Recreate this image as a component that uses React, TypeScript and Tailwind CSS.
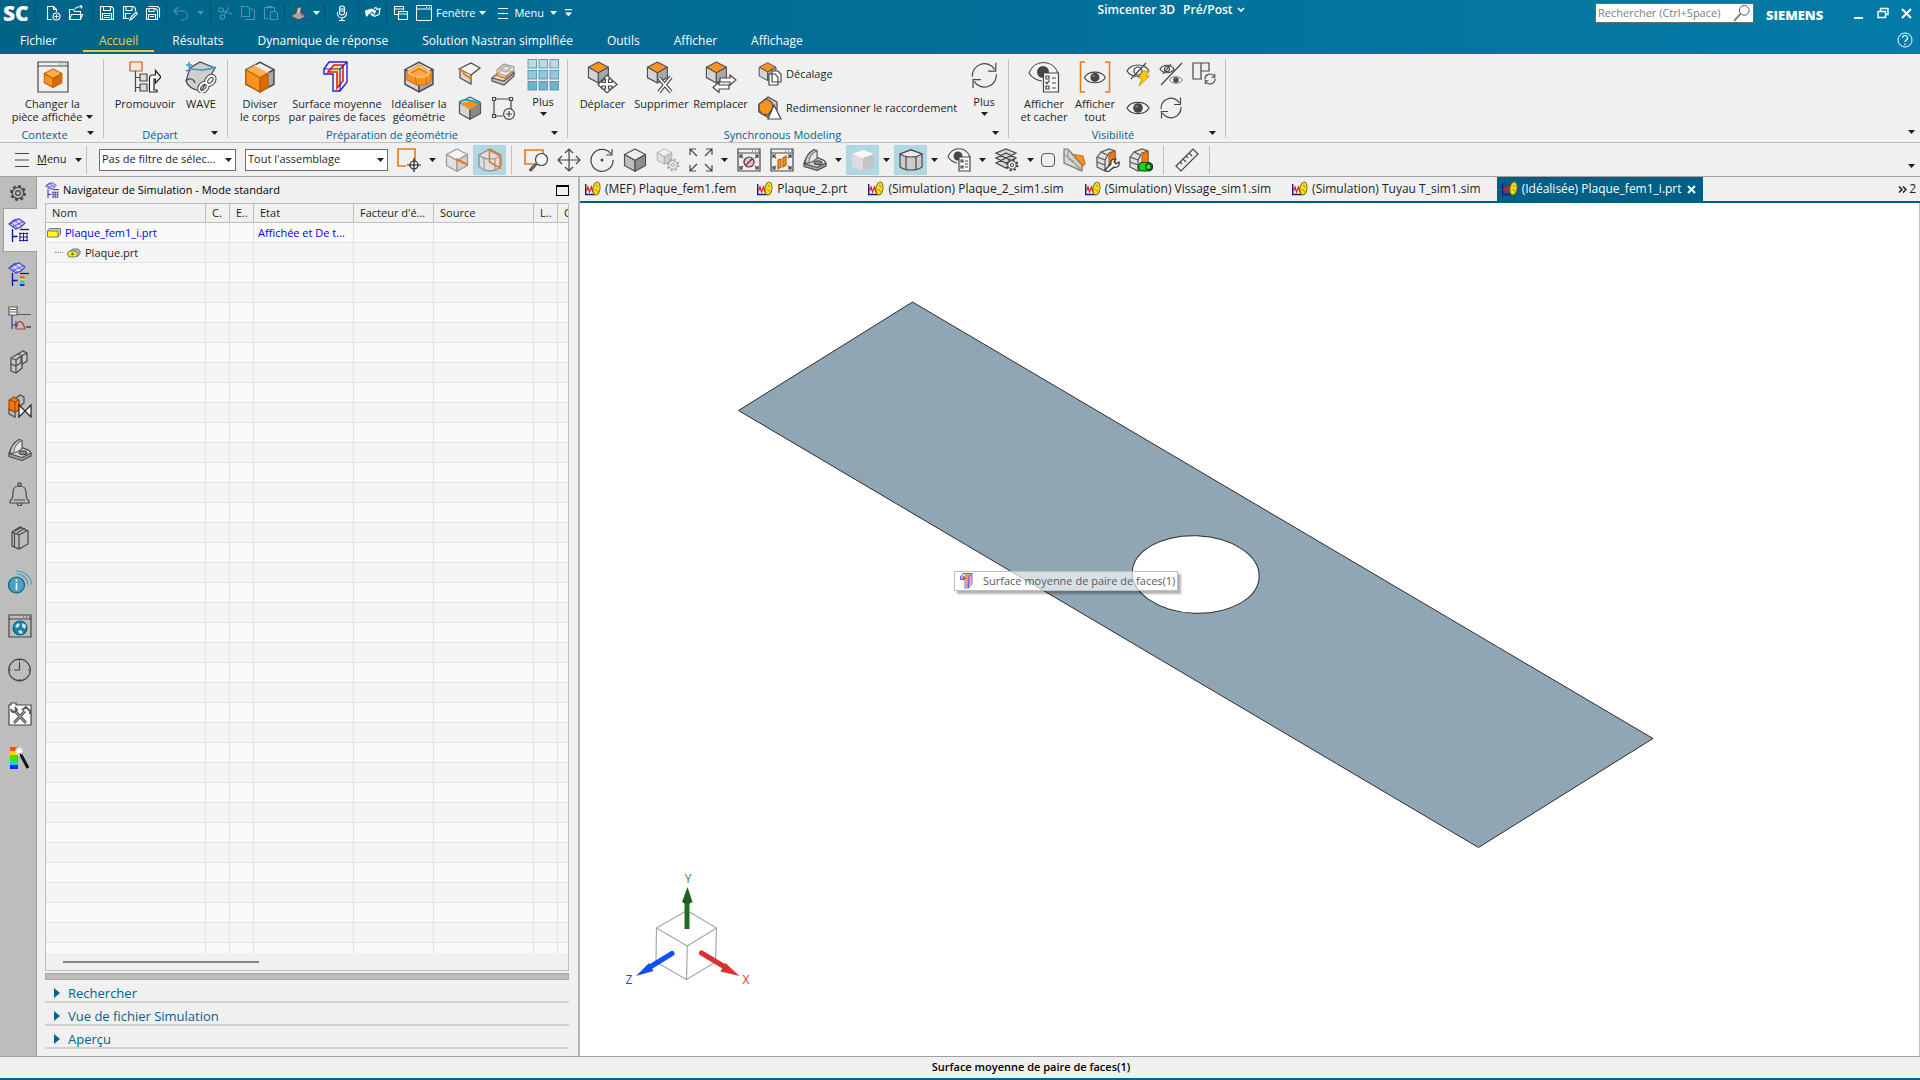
import React from "react";

type IconProps = { size?: number; box?: number; children: React.ReactNode };

function Svg({ size = 24, box = 24, children }: IconProps) {
    return (
        <svg
            width={size}
            height={size}
            viewBox={`0 0 ${box} ${box}`}
            fill="none"
            stroke="#464646"
            strokeWidth="1.2"
            className="shrink-0"
            aria-hidden="true"
        >
            {children}
        </svg>
    );
}

function Caret({ light = false }: { light?: boolean }) {
    return (
        <svg width="7" height="4" viewBox="0 0 7 4" className="shrink-0" aria-hidden="true">
            <path d="M0 0h7L3.500 4z" fill={light ? "#fff" : "#1e1e1e"} />
        </svg>
    );
}

type CubeProps = { x?: number; y?: number; s?: number; top?: string; left?: string; right?: string; line?: string };

function Cube({ x = 0, y = 0, s = 1, top = "#f2f2f2", left = "#d4d4d4", right = "#a8a8a8", line = "#505050" }: CubeProps) {
    return (
        <g transform={`translate(${x} ${y}) scale(${s})`} stroke={line} strokeWidth="1.2" strokeLinejoin="round">
            <path d="M12 1l10.500 5.500L12 12.500 1.500 6.500z" fill={top} />
            <path d="M1.500 6.500L12 12.500V23.200L1.500 17.500z" fill={left} />
            <path d="M22.500 6.500L12 12.500V23.200l10.500-5.700z" fill={right} />
        </g>
    );
}

const orange = { top: "#ffb04d", left: "#f7931e", right: "#d96a00", line: "#c26000" };

function Eye({ x = 0, y = 0, s = 1 }: { x?: number; y?: number; s?: number }) {
    return (
        <g transform={`translate(${x} ${y}) scale(${s})`}>
            <path d="M1 12C5 4.500 19 4.500 23 12 19 19.500 5 19.500 1 12z" fill="#f4f4f4" />
            <circle cx="12" cy="12" r="4.800" fill="#464646" stroke="none" />
            <circle cx="10.500" cy="10.500" r="1.200" fill="#8a8a8a" stroke="none" />
        </g>
    );
}

function Gear({ x, y, s = 1, color = "#464646" }: { x: number; y: number; s?: number; color?: string }) {
    return (
        <g transform={`translate(${x} ${y}) scale(${s})`} stroke={color}>
            <circle r="6.500" strokeWidth="3" strokeDasharray="2.700 2.400" />
            <circle r="5.200" fill="#f0f0f0" />
            <circle r="2" />
        </g>
    );
}

function Bracket() {
    return (
        <g stroke="#4a4a4a" strokeLinejoin="round">
            <path d="M1 15.500v3l13 4 9-4.500v-3l-2-2.500-6-2.500-13 2.500z" fill="#a2a2a2" />
            <path d="M1 15.500l13 4 9-4.500-2-2.500-6-2.500-8 3z" fill="#dadada" />
            <path d="M2 13.500c1-5 4-9 9-12l3 1v8l-6 4-6 1z" fill="#c9c9c9" />
            <path d="M6 14c0-5 3-9 8-11.500v8l-6 4z" fill="#e6e6e6" stroke="#777" />
            <ellipse cx="15" cy="14.800" rx="3.800" ry="1.900" fill="#8a8a8a" />
        </g>
    );
}

function Refresh() {
    return (
        <>
            <path d="M2 13A10 10 0 0 1 20.500 7M22 11A10 10 0 0 1 3.500 17" />
            <path d="M21.500 1.500v7h-6.500M2.500 22.500v-7h6.500" />
        </>
    );
}

function ExpandArrows() {
    return <path d="M1 7V1h6M1 1l7 7M17 1h6v6M23 1l-7 7M1 17v6h6M1 23l7-7M23 17v6h-6M23 23l-7-7" />;
}

function MidSurface() {
    return (
        <g>
            <path d="M3 8l5-7h18v20l-7 9h-7V13H3z" fill="#f0f1ff" stroke="#2323c8" strokeWidth="1.400" />
            <path d="M7 11l6-7h9v16l-6 7V11z" fill="#ffe87a" stroke="#f01414" strokeWidth="1.600" />
            <path d="M3 8h16v22M19 8l7-7" stroke="#2323c8" strokeWidth="1.200" />
        </g>
    );
}

function NavTree({ kind }: { kind: "mesh" | "result" }) {
    return (
        <>
            <path d="M1 6l5-4 5-1 6 4-4 4-5 2z" fill="#d8d8ff" stroke="#4141d4" />
            <path d="M3 4.500l7 6M6 2l8 6M1 6l9-4.500M4 9l11-5" stroke="#4141d4" strokeWidth=".8" />
            <path d="M4.500 11v13M4.500 18.500h5" stroke="#101090" strokeWidth="1.300" />
            <path d="M12 11.500h9" stroke="#222" strokeWidth="1.300" />
            {kind === "mesh" && (
                <path d="M12 14.500v9M15.500 14.500v9M19 14.500v9M11 15.500h9M11 19h9M11 22.500h9" stroke="#2020a0" strokeWidth="1" />
            )}
            {kind === "result" && (
                <g stroke="none">
                    <path d="M12 14.500h4.500v2H12z" fill="#f33" />
                    <path d="M12 16.500h4.500v2H12z" fill="#fd0" />
                    <path d="M12 18.500h4.500v2H12z" fill="#2d4" />
                    <path d="M12 20.500h4.500v2H12z" fill="#2dd" />
                    <path d="M12 22h4.500v2H12z" fill="#22f" />
                </g>
            )}
        </>
    );
}

function WindowFrame({ children }: { children: React.ReactNode }) {
    return (
        <>
            <path d="M1 1h22v22H1zM1 5h22" />
            <path d="M15 3h1M18 3h1M21 3h1" strokeWidth="1.200" />
            {children}
        </>
    );
}

function Brick({ cut = false }: { cut?: boolean }) {
    return (
        <g stroke="#555">
            <path d="M1 9l4-5 8-3 6 2v16l-4 2-6 2-8-4z" fill="#e0e0e0" />
            <path d="M1 9l8 3v11M9 12l4-7 6-2M1 14l8 3M5 4l6 3" />
            <path d="M13 8l3-4h3v15l-6 2z" fill="#ef7d15" stroke="#c96000" />
            {cut && <path d="M13 17l4-6" />}
        </g>
    );
}

function FileGlyph() {
    return (
        <svg width="16" height="16" viewBox="0 0 16 16" fill="none" className="shrink-0" aria-hidden="true">
            <path d="M.700 3v10.500h10" stroke="#1b1b7c" strokeWidth="1.400" />
            <path d="M1.500 10l1.500-4 1.500 5 2-5 1 4 1.500-4" stroke="#d8202c" strokeWidth="1.200" />
            <ellipse cx="11.500" cy="7.500" rx="3.500" ry="6.500" fill="#f5dc1e" stroke="#8a7400" transform="rotate(8 11.500 7.500)" />
            <path d="M11 4l2 2M10.500 8l2 2.500" stroke="#9a8200" />
        </svg>
    );
}

/* ---------- title bar ---------- */

function TitleIcon({ label, dim = false, children }: { label: string; dim?: boolean; children: React.ReactNode }) {
    return (
        <button aria-label={label} className={dim ? "w-[23px] flex justify-center opacity-30" : "w-[23px] flex justify-center"}>
            <svg width="16" height="16" viewBox="0 0 16 16" fill="none" stroke="#fff" strokeWidth="1.100" aria-hidden="true">
                {children}
            </svg>
        </button>
    );
}

function TitleSep() {
    return <span className="w-px h-5 mx-[2px] bg-[#004f70]" />;
}

function QuickAccess() {
    return (
        <div className="flex items-center h-[26px]">
            <span className="w-[33px] pl-[3px] text-[21px] leading-6 font-extrabold">SC</span>
            <TitleSep />
            <div className="flex px-[3px]">
                <TitleIcon label="Nouveau">
                    <path d="M7 14.500H2.500v-13h6l3 3V7M8.500 1.500v3h3" />
                    <circle cx="11.500" cy="11.500" r="3.500" />
                    <path d="M11.500 9.500v4M9.500 11.500h4" />
                </TitleIcon>
                <TitleIcon label="Ouvrir">
                    <path d="M1.500 14.500v-10h4l1 2h6v8zM1.500 14.500l2-5h11l-2 5M7 4c1-2 4-2.500 7-2.500M12 .5l2 1-1 2" />
                </TitleIcon>
            </div>
            <TitleSep />
            <TitleIcon label="Enregistrer">
                <path d="M1.500 1.500h11l2 2v11h-13zM4.500 1.500v4h7v-4M3.500 14.500v-6h9v6M5 10.500h6M5 12.500h6" />
            </TitleIcon>
            <TitleIcon label="Enregistrer sous">
                <path d="M7 13.500H1.500v-12h10l2 2V6M4 1.500v4h6v-4M3.500 13.500v-5H9M8 15l1-3 5-5 1.500 1.500-5 5z" />
            </TitleIcon>
            <TitleIcon label="Tout enregistrer">
                <path d="M3.500 1.500h9l2 2v9M1.500 3.500h9l2 2v9h-11zM4 3.500v3h5v-3M3.500 14.500v-5h7v5M5 11.500h4" />
            </TitleIcon>
            <TitleSep />
            <TitleIcon label="Annuler" dim>
                <path d="M1 6h9a4.500 4.500 0 0 1 0 9H8M5 2L1 6l4 4" />
            </TitleIcon>
            <span className="w-4 flex justify-center opacity-30"><Caret light /></span>
            <TitleSep />
            <TitleIcon label="Couper" dim>
                <circle cx="4" cy="5" r="2.200" /><circle cx="5.500" cy="12" r="2.200" />
                <path d="M6 6l9 3M7 10.500L12 2" />
            </TitleIcon>
            <TitleIcon label="Copier" dim>
                <path d="M1.500 11.500v-10h6l2 2v8zM5.500 14.500h9V6l-2-2h-3" />
            </TitleIcon>
            <TitleIcon label="Coller" dim>
                <path d="M6 13.500H1.500v-11h10V6M4.500 3.500v-2h4v2M7.500 6.500h5l2 2v6h-7z" />
            </TitleIcon>
            <TitleSep />
            <TitleIcon label="Pièce">
                <path d="M1 10l4-2 1-5 4-2v7l4 2v2l-6 3-7-3z" fill="#a8a8a8" stroke="#4a4a4a" />
                <path d="M7 8l2-5" stroke="#ddd" />
                <path d="M10 10l2 1" stroke="#e04020" />
            </TitleIcon>
            <span className="w-3 flex justify-center"><Caret light /></span>
            <TitleSep />
            <div className="flex px-[3px]">
                <TitleIcon label="Microphone">
                    <rect x="5.500" y="1" width="5" height="9" rx="2.500" />
                    <path d="M3.500 7v1.500a4.500 4.500 0 0 0 9 0V7M8 13v2.500M5 15.500h6M6 4h4M6 6h4" />
                </TitleIcon>
            </div>
            <TitleSep />
            <TitleIcon label="Mode tactile">
                <path d="M.5 6l6-2 4 2-2 5-3-2-4 2z" fill="#fff" stroke="#fff" />
                <path d="M3 10.500l3-2M6 7l3 2" stroke="#006488" />
                <path d="M9 3.500l2-1 1 2 3-1-1 6-5 2" />
            </TitleIcon>
            <TitleSep />
            <TitleIcon label="Changer de fenêtre">
                <path d="M5 9.500H1.500v-8h9V5M1.500 4h9M5.500 6.500h9v8h-9zM5.500 9h9" />
            </TitleIcon>
            <button className="flex items-center gap-1 ml-1 text-[11px]">
                <svg width="16" height="16" viewBox="0 0 16 16" fill="none" stroke="#fff" aria-hidden="true">
                    <path d="M.5 .5h15v15H.5zM.5 4h15M10 2.500h1M13 2.500h1" />
                </svg>
                Fenêtre
                <Caret light />
            </button>
            <button className="flex items-center gap-[6px] ml-3 text-[11px]">
                <svg width="10" height="11" viewBox="0 0 10 11" stroke="#fff" aria-hidden="true">
                    <path d="M0 .5h10M0 5.500h10M0 10.500h10" />
                </svg>
                Menu
                <Caret light />
            </button>
            <button aria-label="Options de la barre" className="ml-2">
                <svg width="7" height="8" viewBox="0 0 7 8" aria-hidden="true">
                    <path d="M0 0h7v1.200H0zM0 3.500h7L3.500 7.500z" fill="#fff" />
                </svg>
            </button>
        </div>
    );
}

function TitleBar() {
    const menus = ["Accueil", "Résultats", "Dynamique de réponse", "Solution Nastran simplifiée", "Outils", "Afficher", "Affichage"];
    return (
        <header className="h-[54px] shrink-0 bg-linear-to-r from-[#006487] to-[#057ba8] text-white flex flex-col">
            <div className="flex h-[26px]">
                <QuickAccess />
                <span className="grow-3" />
                <button className="h-5 flex items-center gap-2 text-xs font-semibold">
                    Simcenter 3D
                    <span className="flex items-center gap-1">
                        Pré/Post
                        <svg width="8" height="6" viewBox="0 0 8 6" fill="none" stroke="#fff" strokeWidth="1.600" aria-hidden="true">
                            <path d="M1 1l3 3 3-3" />
                        </svg>
                    </span>
                </button>
                <span className="grow-2" />
                <div className="flex items-center">
                    <label className="flex items-center w-[159px] h-5 bg-white border border-[#6a6a6a] px-[2px]">
                        <input
                            aria-label="Rechercher"
                            placeholder="Rechercher (Ctrl+Space)"
                            className="w-0 grow text-[11px] text-black placeholder:text-[#7d7d7d] outline-none"
                        />
                        <Svg size={18}>
                            <circle cx="15" cy="8.500" r="6.500" />
                            <path d="M10.500 13.500l-8 9M9.500 12.500l-8 9 1 1.500" />
                        </Svg>
                    </label>
                    <span className="w-[100px] pl-3 pt-[3px] text-[13px] leading-4 font-extrabold">SIEMENS</span>
                    <button aria-label="Réduire" className="w-[9px] h-3 border-b-2 border-white" />
                    <button aria-label="Restaurer" className="ml-[14px]">
                        <svg width="12" height="12" viewBox="0 0 12 12" fill="none" stroke="#fff" strokeWidth="1.400" aria-hidden="true">
                            <path d="M3.500 4V1.500h7.500v6H8.500M1 4.500h7.500v6H1z" />
                        </svg>
                    </button>
                    <button aria-label="Fermer" className="ml-3 mr-2">
                        <svg width="11" height="11" viewBox="0 0 11 11" stroke="#fff" strokeWidth="2" aria-hidden="true">
                            <path d="M1 1l9 9M10 1l-9 9" />
                        </svg>
                    </button>
                </div>
            </div>
            <nav className="flex gap-[2px] h-[28px] pl-1 pr-[7px] items-start text-xs leading-[30px]">
                <a href="#" className="h-[26px] pl-4 pr-6">Fichier</a>
                {menus.map((name) => (
                    <a
                        key={name}
                        href="#"
                        className={name === "Accueil" ? "h-[26px] px-4 text-[#ffc83c] border-b-2 border-[#ffc83c]" : "h-[26px] px-4"}
                    >
                        {name}
                    </a>
                ))}
                <button aria-label="Aide" className="ml-auto mt-[6px]">
                    <svg width="16" height="16" viewBox="0 0 16 16" fill="none" stroke="#fff" aria-hidden="true">
                        <circle cx="8" cy="8" r="7" />
                        <path d="M5.500 6a2.500 2.500 0 1 1 3.500 2.300c-.8.400-1 .7-1 1.700M8 11.500v1.500" strokeWidth="1.200" />
                    </svg>
                </button>
            </nav>
        </header>
    );
}

/* ---------- ribbon ---------- */

function Group({ title, className, children }: { title: string; className: string; children: React.ReactNode }) {
    return (
        <section className={`flex flex-col h-[79px] mt-[5px] border-r border-[#bebebe] ${className}`}>
            <div className="flex h-[69px] shrink-0">{children}</div>
            <div className="flex items-center h-[13px]">
                <h2 className="grow text-center text-[11px] leading-[13px] text-[#00648c]">{title}</h2>
                <button aria-label={`Options ${title}`} className="w-4 h-3 pb-1 flex items-center"><Caret /></button>
            </div>
        </section>
    );
}

function BigButton({ lines, caret = false, className, children }: { lines: string[]; caret?: boolean; className: string; children: React.ReactNode }) {
    return (
        <button className={`flex flex-col items-center shrink-0 pt-[2px] text-[11px] leading-[13px] whitespace-nowrap ${className}`}>
            <Svg size={32} box={32}>{children}</Svg>
            <span className="mt-1">{lines[0]}</span>
            {lines[1] && (
                <span className="flex items-center gap-1">
                    {lines[1]}
                    {caret && <Caret />}
                </span>
            )}
        </button>
    );
}

function PlusButton({ children }: { children: React.ReactNode }) {
    return (
        <button className="w-12 shrink-0 flex flex-col items-center text-[11px] leading-[13px]">
            <Svg size={32} box={32}>{children}</Svg>
            <span className="mt-1 mb-1">Plus</span>
            <Caret />
        </button>
    );
}

function SmallButton({ label, children }: { label: string; children: React.ReactNode }) {
    return (
        <button aria-label={label} className="w-[33px] h-[34px] flex items-center justify-center">
            <Svg>{children}</Svg>
        </button>
    );
}

const faceTop = { top: "#f7931e" };

function Ribbon() {
    return (
        <div className="h-[89px] shrink-0 flex bg-[#f0f0f0] border-b border-[#bebebe]">
            <Group title="Contexte" className="w-[104px] pl-[2px]">
                <BigButton lines={["Changer la", "pièce affichée"]} caret className="w-full">
                    <path d="M1 1h30v30H1zM1 5h30M22 3h1M25 3h1M28 3h1" />
                    <Cube x={6} y={7} s={0.84} {...orange} />
                </BigButton>
            </Group>
            <Group title="Départ" className="w-[124px] pl-[5px]">
                <BigButton lines={["Promouvoir"]} className="w-18">
                    <path d="M1 1h12v9H1z" fill="#f3e6dc" stroke="#c95a1e" />
                    <path d="M6.500 10v21M6.500 16.500H11M6.500 26.500H11" />
                    <path d="M11 13h7v7h-7zM11 23h7v7h-7z" fill="#ddd" />
                    <path d="M20.500 31V17c0-2 1-3 3-3h3V9.500l5.500 6.500-5.500 6V18h-1.500v11h3v2z" fill="#fff" stroke="#222" />
                </BigButton>
                <BigButton lines={["WAVE"]} className="w-10">
                    <path d="M1 20l4-13 10-6 15 6-6 10-8 13c-8-1-13-4-15-10z" fill="#cfcfcf" />
                    <path d="M1 20c3-4 8-2 9 2" />
                    <path d="M1 4h6M4 1v6M1 10c8-5 14 3 30-4" stroke="#1aa7c9" strokeWidth="1.500" />
                    <g strokeWidth="4"><ellipse cx="25.500" cy="19" rx="3.500" ry="5" transform="rotate(40 25 19)" /><ellipse cx="18.500" cy="26" rx="3.500" ry="5" transform="rotate(40 18 26)" /></g>
                    <g stroke="#fff" strokeWidth="2"><ellipse cx="25.500" cy="19" rx="3.500" ry="5" transform="rotate(40 25 19)" /><ellipse cx="18.500" cy="26" rx="3.500" ry="5" transform="rotate(40 18 26)" /></g>
                </BigButton>
            </Group>
            <Group title="Préparation de géométrie" className="w-[340px] pl-[5px]">
                <BigButton lines={["Diviser", "le corps"]} className="w-[54px]">
                    <Cube s={1.33} />
                    <path d="M2 9l9-5 14 7.500-9 5z" fill="#ffb04d" stroke="none" />
                    <path d="M2 9l14 7.500V31L2 23z" fill="#f7931e" stroke="#c26000" />
                    <path d="M16 16.500l8-4.500v14.500L16 31z" fill="#d96a00" stroke="#c26000" />
                    <path d="M11 4l13 7.500" stroke="#e8e8e8" />
                </BigButton>
                <BigButton lines={["Surface moyenne", "par paires de faces"]} className="w-25">
                    <MidSurface />
                </BigButton>
                <BigButton lines={["Idéaliser la", "géométrie"]} className="w-16">
                    <Cube s={1.33} />
                    <path d="M4 11l12-7 12 7v8l-5 5H14L4 19z" fill="#f7931e" stroke="#d97408" />
                    <path d="M5 11l11-6 11 6-4 5H12z" fill="#ffac48" stroke="#ffd08f" />
                    <path d="M12 16l2 8M23 16v8M8 12l8-4 8 4" stroke="#d97408" />
                </BigButton>
                <div className="flex flex-wrap content-start shrink-0 w-[66px] ml-[2px] -mt-[2px]">
                    <SmallButton label="Séparer les faces">
                        <path d="M1 7l12-6 9 5-9 7z" fill="#f5f5f5" />
                        <path d="M13 13v9L2 16V8" fill="#d8d8d8" />
                        <path d="M1 7l5 3v2l6 4 1-3" stroke="#e67a10" strokeWidth="1.800" />
                    </SmallButton>
                    <SmallButton label="Empiler les faces">
                        <path d="M1 16v3l12 4 10-9v-4z" fill="#bdbdbd" stroke="#555" />
                        <path d="M1 16l10-8 12 3-10 8z" fill="#ddd" stroke="#555" />
                        <path d="M5 13l7-6 9 3-7 6z" fill="#fff" stroke="#e67a10" strokeWidth="1.800" />
                        <path d="M6 8l7-6 10 3v3l-8 6-9-3z" fill="#e4e4e4" fillOpacity=".6" stroke="#999" />
                        <path d="M9 8l5-4 6 2-5 4z" stroke="#aaa" />
                    </SmallButton>
                    <SmallButton label="Diviser la face">
                        <Cube right="#8a8a8a" />
                        <path d="M2 7l10-2 10 2-10 7z" fill="#f7931e" stroke="none" />
                        <path d="M1 6c7-4 14-1 22 2" stroke="#1aa7c9" strokeWidth="2" />
                    </SmallButton>
                    <SmallButton label="Ajouter une esquisse">
                        <path d="M3 3h17v11M3 3v17h9" />
                        <path d="M1.500 1.500h3v3h-3zM18.500 1.500h3v3h-3zM1.500 18.500h3v3h-3z" fill="#f0f0f0" />
                        <circle cx="18" cy="18" r="5.400" fill="#f0f0f0" />
                        <path d="M18 15v6M15 18h6" />
                    </SmallButton>
                </div>
                <PlusButton>
                    {[0, 11, 22].map((y) =>
                        [1, 12, 23].map((x) => (
                            <rect
                                key={`${x}-${y}`}
                                x={x}
                                y={y + 0.5}
                                width="8.5"
                                height="8.5"
                                fill={y === 0 ? "#b9dbe6" : y === 11 ? "#98c8d8" : "#73b2c8"}
                                stroke="#3f8fae"
                                strokeWidth=".8"
                            />
                        ))
                    )}
                </PlusButton>
            </Group>
            <Group title="Synchronous Modeling" className="w-[441px] pl-[5px]">
                <BigButton lines={["Déplacer"]} className="w-[59px]">
                    <Cube s={0.95} {...faceTop} />
                    <path d="M20 14l4 4h-2.500v3.500H25V19l5 4.500-5 4V25h-3.500v3H24l-4 4-4-4h2.500v-3H15v2.500l-4-4 4-4.500v2.500h3.500V18H16z" fill="#fff" />
                </BigButton>
                <BigButton lines={["Supprimer"]} className="w-[59px]">
                    <Cube s={0.95} {...faceTop} />
                    <path d="M13 17l12 14M25 16L13 31" strokeWidth="4" />
                    <path d="M13 17l12 14M25 16L13 31" stroke="#fff" strokeWidth="1.800" />
                </BigButton>
                <BigButton lines={["Remplacer"]} className="w-[59px]">
                    <Cube s={0.95} {...faceTop} />
                    <path d="M15 17h10v-3l6 5-6 5v-3H15zM24 24H14v-3l-6 5.500 6 5V28h10z" fill="#fff" />
                </BigButton>
                <div className="flex flex-col grow pl-2 -mt-[2px] text-[11px]">
                    <button className="flex items-center gap-1 h-[34px]">
                        <Svg>
                            <Cube s={0.8} {...faceTop} />
                            <path d="M14 9h6l3 3v8h-9zM11 12h6l3 3v8h-9z" fill="#fff" />
                        </Svg>
                        Décalage
                    </button>
                    <button className="flex items-center gap-1 h-[34px]">
                        <Svg>
                            <path d="M1 9l9-8 9 5v9l-8 7-10-6z" fill="#ccc" />
                            <path d="M1 8l7-5c5 1 7 4 7 9l-5 7-6-1-3-4z" fill="#f7931e" stroke="#444" />
                            <path d="M16 9l7 14H10z" fill="#fff" />
                        </Svg>
                        Redimensionner le raccordement
                    </button>
                </div>
                <PlusButton>
                    <g transform="translate(2 2) scale(1.200)" strokeWidth="1"><Refresh /></g>
                </PlusButton>
            </Group>
            <Group title="Visibilité" className="w-[217px] pl-2">
                <BigButton lines={["Afficher", "et cacher"]} className="w-[54px]">
                    <path d="M1 12C6-2 25-2 30 12M1 12c3 5 7 7 13 8" fill="#f4f4f4" />
                    <circle cx="15" cy="11" r="6" fill="#464646" stroke="none" />
                    <path d="M15.500 12h15v19h-15z" fill="#f8f8f8" />
                    <path d="M18 15h3v3h-3zM18 25h3v3h-3zM17.500 21l1.500 1.500 2.500-3M24 17h4M24 22h4M24 27h4" />
                </BigButton>
                <BigButton lines={["Afficher", "tout"]} className="w-12">
                    <g transform="translate(4.500 5) scale(.95)"><Eye /></g>
                    <path d="M6 1H1.500v30H6M26 1h4.500v30H26" stroke="#e67a10" strokeWidth="1.500" />
                </BigButton>
                <div className="flex flex-wrap content-start shrink-0 w-[99px] ml-[2px] -mt-[2px]">
                    <SmallButton label="Cacher immédiatement">
                        <path d="M1 9c4-8 18-8 22 0-4 7-18 7-22 0zM20 1L5 17" />
                        <circle cx="12" cy="9" r="4" />
                        <path d="M17 9h6l-3 5h3.500L13 24l3-8h-3.500z" fill="#ffc814" stroke="#c98a00" strokeWidth=".8" />
                    </SmallButton>
                    <SmallButton label="Inverser affiché et caché">
                        <path d="M23 1L2 23M1 7c3-5 11-5 14 0-3 5-11 5-14 0zM12 2L4 12" />
                        <circle cx="8" cy="7" r="2.500" />
                        <Eye x={10} y={11} s={0.58} />
                    </SmallButton>
                    <SmallButton label="Disposition">
                        <path d="M10 17H1V1h16v8H9M9 1v16" />
                        <g transform="translate(12 11) scale(.5)" strokeWidth="2.200"><Refresh /></g>
                    </SmallButton>
                    <SmallButton label="Afficher"><Eye /></SmallButton>
                    <SmallButton label="Actualiser"><Refresh /></SmallButton>
                </div>
            </Group>
            <button aria-label="Options du ruban" className="ml-auto self-end px-[5px] pb-2"><Caret /></button>
        </div>
    );
}

/* ---------- selection toolbar ---------- */

function Tool({ label, on = false, children }: { label: string; on?: boolean; children: React.ReactNode }) {
    return (
        <button aria-label={label} className={on ? "w-[33px] h-[30px] flex items-center justify-center bg-[#b0d7e2]" : "w-[33px] h-[30px] flex items-center justify-center"}>
            <Svg>{children}</Svg>
        </button>
    );
}

function ToolCaret() {
    return <button aria-label="Plus d'options" className="w-[15px] flex justify-center"><Caret /></button>;
}

function Select({ label, value, className }: { label: string; value: string; className: string }) {
    return (
        <div className={`relative flex items-center ${className}`}>
            <select aria-label={label} className="appearance-none w-full h-[22px] pl-[2px] pr-4 text-[11px] bg-white border border-[#6e6e6e]">
                <option>{value}</option>
            </select>
            <span className="absolute right-1 pointer-events-none"><Caret /></span>
        </div>
    );
}

const cornerArrows = "M3 10V7h3M3 7l3 3M21 10V7h-3M21 7l-3 3M3 18v3h3M3 21l3-3M21 18v3h-3M21 21l-3-3";

function Toolbar() {
    return (
        <div className="h-[34px] shrink-0 flex items-center bg-[#f0f0f0] border-b border-[#a0a0a0]">
            <button className="flex items-center gap-2 w-[87px] pl-[15px] text-[11px] border-r border-[#bebebe] h-[28px]">
                <svg width="14" height="14" viewBox="0 0 14 14" stroke="#464646" aria-hidden="true">
                    <path d="M0 .5h14M0 7h14M0 13.500h14" />
                </svg>
                <span><u>M</u>enu</span>
                <Caret />
            </button>
            <Select label="Filtre de sélection" value="Pas de filtre de sélec..." className="w-[137px] ml-3" />
            <Select label="Portée" value="Tout l'assemblage" className="w-[143px] ml-[9px]" />
            <span className="w-1" />
            <Tool label="Point">
                <path d="M9 18H1V1h17v13" stroke="#e67a10" strokeWidth="1.600" />
                <circle cx="17" cy="17" r="4" stroke="#222" />
                <path d="M17 10v14M10 17h14" stroke="#222" />
            </Tool>
            <ToolCaret />
            <Tool label="Arête">
                <Cube top="#f5f5f5" left="#e2e2e2" right="#d0d0d0" line="#999" />
                <path d="M11 11l12 6" stroke="#e67a10" strokeWidth="2" />
            </Tool>
            <Tool label="Face" on>
                <path d="M1 7l11-6 11 6v11c-4 6-17 7-22 0z" fill="#dedede" stroke="#888" />
                <path d="M1 7c4 4 8 4 11 4s8 0 11-4M6 10v12M17 10v12" stroke="#999" />
                <path d="M11.500 2v12l10.500 6V8z" stroke="#e67a10" strokeWidth="1.500" />
            </Tool>
            <span className="w-px h-[28px] ml-[5px] mr-[7px] bg-[#bebebe]" />
            <Tool label="Zoom">
                <path d="M9 16H1V2h18v4" stroke="#e67a10" strokeWidth="1.600" />
                <circle cx="17.500" cy="11.500" r="6" fill="#f8f8f8" />
                <path d="M13 16l-6 7-1.500-1 6-7" fill="#ccc" />
            </Tool>
            <Tool label="Déplacer la vue">
                <path d="M12 1v22M1 12h22M8 5l4-4 4 4M8 19l4 4 4-4M5 8l-4 4 4 4M19 8l4 4-4 4" />
            </Tool>
            <Tool label="Rotation">
                <path d="M21 6A11 11 0 1 0 23 12M22 1v6h-6" />
                <circle cx="12" cy="12" r="1.500" fill="#464646" stroke="none" />
            </Tool>
            <Tool label="Trimétrique"><Cube top="#eee" left="#bdbdbd" right="#8e8e8e" /></Tool>
            <Tool label="Options de rendu">
                <Cube s={0.7} line="#aaa" top="#eee" left="#ddd" right="#ccc" />
                <Gear x={17} y={17} s={0.8} color="#a8a8a8" />
            </Tool>
            <Tool label="Ajuster"><ExpandArrows /></Tool>
            <ToolCaret />
            <Tool label="Masquer la pièce">
                <WindowFrame>
                    <path d={cornerArrows} />
                    <path d="M5 14l3-3h8l3 3-3 3H8z" fill="#f6b6c8" stroke="none" />
                    <circle cx="12" cy="14" r="5" fill="#f6b6c8" />
                    <path d="M8.500 17.500l7-7" />
                </WindowFrame>
            </Tool>
            <Tool label="Sections">
                <WindowFrame>
                    <path d={cornerArrows} />
                    <path d="M8 12l3-1v8l-3 2zM13 10l3-2v9l-3 2z" fill="#f7931e" stroke="#c26000" />
                </WindowFrame>
            </Tool>
            <Tool label="Style de pièce"><Bracket /></Tool>
            <ToolCaret />
            <Tool label="Ombré" on>
                <path d="M1 6l11-4 11 4v13l-11 4-11-4z" fill="#dcdcdc" stroke="none" />
                <path d="M1 6l11-4 11 4-11 4z" fill="#f8f8f8" stroke="none" />
                <path d="M12 10l11-4v13l-11 4z" fill="#c4c4c4" stroke="none" />
            </Tool>
            <ToolCaret />
            <Tool label="Ombré avec arêtes" on>
                <path d="M1 6l11-4 11 4v13c-5 4-17 4-22 0z" fill="#ccc" />
                <path d="M1 6l11-4 11 4c-6 4-16 4-22 0z" fill="#ececec" />
                <path d="M7 9v13M17 9v13" />
            </Tool>
            <ToolCaret />
            <Tool label="Afficher et cacher">
                <path d="M1 9C5-2 19-2 23 9M1 9c2 3 5 5 9 6" fill="#f4f4f4" />
                <circle cx="11" cy="8" r="4.500" fill="#464646" stroke="none" />
                <path d="M12 9h11v14H12z" fill="#f8f8f8" />
                <path d="M14 12h2v2h-2zM14 18h2v2h-2zM18 13h3M18 16h3M18 19h3" />
            </Tool>
            <ToolCaret />
            <Tool label="Calques">
                <path d="M1 15l10-5 10 5-10 5zM1 10l10-5 10 5-10 5zM1 5l10-4 10 4-10 5z" fill="#d8d8d8" />
                <Gear x={17} y={17} s={0.8} />
            </Tool>
            <ToolCaret />
            <span className="w-5 flex justify-center">
                <input type="checkbox" aria-label="Section active" className="appearance-none w-[14px] h-[14px] border border-[#555] rounded-sm" />
            </span>
            <Tool label="Plan de coupe">
                <path d="M8 6l12 2 2 8-7 6z" fill="#f7931e" stroke="#d97408" />
                <path d="M1 1h4l14 16v6L1 15z" fill="#d6d6d6" fillOpacity=".85" stroke="#777" />
                <path d="M5 1v9l14 12M1 6l10 8" stroke="#999" />
            </Tool>
            <Tool label="Modifier la section">
                <Brick cut />
                <path d="M9 22l6-6c-1-3 2-6 5-5l-2 3 2 2 3-2c1 4-2 6-5 5l-6 5z" fill="#fff" stroke="#333" />
            </Tool>
            <Tool label="Activer la section">
                <Brick />
                <rect x="9.500" y="14.500" width="14" height="8.500" rx="4" fill="#19d419" stroke="#0a3c0a" />
                <circle cx="19.500" cy="18.700" r="2.800" fill="#33e833" stroke="#0a3c0a" />
            </Tool>
            <span className="w-px h-[28px] mx-[6px] bg-[#bebebe]" />
            <Tool label="Mesurer">
                <path d="M1 18L18 1l5 5L6 23zM5 14l2 2M8 11l3 3M11 8l2 2M14 5l3 3" />
            </Tool>
            <span className="w-px h-[28px] ml-[6px] bg-[#bebebe]" />
            <button aria-label="Options de la barre d'outils" className="ml-auto self-end px-[5px] pb-2"><Caret /></button>
        </div>
    );
}

/* ---------- resource bar ---------- */

const resources: { label: string; icon: React.ReactNode }[] = [
    { label: "Navigateur de Simulation", icon: <NavTree kind="mesh" /> },
    { label: "Navigateur de post-traitement", icon: <NavTree kind="result" /> },
    {
        label: "Navigateur XY",
        icon: (
            <>
                <path d="M1 1h8v8H1z" fill="#fff" stroke="#555" />
                <path d="M2 3.500h6M2 6h6M10 8.500h13" stroke="#555" />
                <path d="M4 9v14M4 19h4M8 15v8" stroke="#3a3aa0" />
                <path d="M9 23h8M9 21c0-7 5-7 7-1l1 3" stroke="#c03030" />
                <path d="M18 21h5" stroke="#222" />
            </>
        ),
    },
    {
        label: "Navigateur d'assemblage",
        icon: (
            <g fill="#c8c8c8" strokeLinejoin="round">
                <path d="M10 4l5-3 4 2v8l-6 4z" />
                <path d="M3 8l7-4 4 2v12l-6 5-5-2z" />
                <path d="M3 8l5 2 5-4 6-3M8 10v13M3 14l5 2 6-4" />
                <path d="M13 6v6" />
            </g>
        ),
    },
    {
        label: "Contraintes d'assemblage",
        icon: (
            <>
                <path d="M8 4l4-3 4 2v6l-4 3zM1 15l6 3v5l-6-3z" fill="#bbb" />
                <path d="M1 6l5-3 5 3v10l-4 2-6-3z" fill="#f07a10" stroke="#a04c00" />
                <path d="M1 6l6 2 4-2M7 8v10" stroke="#a04c00" />
                <path d="M11 11v12l6-6zM23 11v12l-6-6z" fill="#fff" stroke="#222" />
            </>
        ),
    },
    { label: "Navigateur de pièces", icon: <Bracket /> },
    {
        label: "Notifications",
        icon: (
            <>
                <circle cx="11.5" cy="2.5" r="1.7" />
                <path d="M4 17c1-2 1-4 1-7 0-8 13-8 13 0 0 3 0 5 1 7l2 2v2H2v-2zM6 18h11M9 21.500c1 3 4 3 5 0" />
            </>
        ),
    },
    {
        label: "Bibliothèque",
        icon: <path d="M4 6l8-5 8 4v13l-9 5-7-3zM4 6l7 3v14M11 9l9-5M6.500 7v14M7 5l7-4M9 7l8-5" />,
    },
    {
        label: "Informations",
        icon: (
            <>
                <circle cx="8.5" cy="15" r="8" fill="#4f9fbe" stroke="#00648c" />
                <path d="M8.500 13v7M8.500 9.500v2" stroke="#fff" strokeWidth="1.600" />
                <path d="M9 4c6 0 11 5 11 11M8 1c9 0 15 6 16 14" stroke="#4f9fbe" />
            </>
        ),
    },
    {
        label: "Navigateur Web",
        icon: (
            <WindowFrame>
                <circle cx="12" cy="14" r="7" fill="#1f7fa4" stroke="#00648c" />
                <path d="M7 12l3-3 2 2-3 3zM14 9l4 2-1 4-3-2zM10 17l3-1 2 3-3 1z" fill="#cfe8f2" stroke="none" />
            </WindowFrame>
        ),
    },
    {
        label: "Historique",
        icon: (
            <>
                <circle cx="11.5" cy="12" r="10.8" />
                <path d="M11.500 4v8H6M11.500 1v2M11.500 21v2M1 12h2M20 12h2" />
            </>
        ),
    },
    {
        label: "Outils",
        icon: (
            <>
                <path d="M1 3h2V1h5v2h15v20H1z" fill="#fff" />
                <path d="M6 8l12 13M17 9L6 21" stroke="#555" strokeWidth="3" />
                <path d="M6 8l12 13M17 9L6 21" stroke="#bbb" strokeWidth="1" />
                <path d="M3 7c0 4 5 4 6 1L7 5M14 8l4-3 4 4v3" stroke="#555" strokeWidth="1.800" />
            </>
        ),
    },
    {
        label: "Rôles",
        icon: (
            <>
                <g stroke="none">
                    <path d="M2 1h8v4H2z" fill="#ff4a1c" />
                    <path d="M2 5h8v4H2z" fill="#ffd800" />
                    <path d="M2 9h8v6H2z" fill="#3ee000" />
                    <path d="M2 15h8v4H2z" fill="#00d8e8" />
                    <path d="M2 19h8v4H2z" fill="#0a28ff" />
                </g>
                <path d="M12 7l8 15" stroke="#111" strokeWidth="3" />
                <path d="M11 1v9M7 5h8M8 2l6 6M14 2L8 8" stroke="#fff" strokeWidth="1.300" />
            </>
        ),
    },
];

function ResourceBar() {
    return (
        <nav className="w-[37px] shrink-0 bg-[#bdbdbd] border-r border-[#a0a0a0]">
            <button aria-label="Réglages" className="flex items-center justify-center w-full h-[31px]">
                <Svg size={18} box={18}>
                    <g transform="translate(9 9)">
                        <circle r="7" strokeWidth="2" strokeDasharray="2.900 2.600" />
                        <circle r="5.6" fill="#bdbdbd" />
                        <circle r="2.4" />
                    </g>
                </Svg>
            </button>
            {resources.map((item, i) => (
                <button
                    key={item.label}
                    aria-label={item.label}
                    className={
                        i === 0
                            ? "flex items-center w-[34px] h-11 ml-[3px] pl-1 bg-[#f0f0f0] border-y border-l border-[#a0a0a0]"
                            : "flex items-center w-full h-11 pl-2"
                    }
                >
                    <Svg>{item.icon}</Svg>
                </button>
            ))}
        </nav>
    );
}

/* ---------- navigator ---------- */

const columns = [
    { name: "Nom", width: 160 },
    { name: "C.", width: 24 },
    { name: "E..", width: 24 },
    { name: "Etat", width: 100 },
    { name: "Facteur d'é...", width: 80 },
    { name: "Source", width: 100 },
    { name: "L..", width: 24 },
    { name: "C", width: 24 },
];

function PartGlyph({ hole = false }: { hole?: boolean }) {
    return (
        <svg width="14" height="10" viewBox="0 0 14 10" className="shrink-0" fill="none" stroke="#777" aria-hidden="true">
            {hole ? (
                <>
                    <path d="M3 3l3-2h5l2 2v3l-3 3" fill="#bbb" />
                    <rect x=".5" y="3" width="10" height="6" rx="3" fill="#f5f000" />
                    <circle cx="5.5" cy="6" r="1.2" fill="#555" stroke="none" />
                </>
            ) : (
                <>
                    <path d="M.5 3l2-2.500h11V6L11 9" fill="#ccc" />
                    <path d="M.5 3h10.500v6H.5z" fill="#ffff00" />
                </>
            )}
        </svg>
    );
}

function NavigatorTable() {
    const cell = "border-r border-b border-[#e3e3e3] h-5 p-0 overflow-hidden whitespace-nowrap";
    return (
        <div className="grow h-0 overflow-hidden">
            <table className="table-fixed w-[536px] border-separate border-spacing-0 text-[11px] leading-[19px]">
                <colgroup>
                    {columns.map((c) => (
                        <col key={c.name} style={{ width: c.width }} />
                    ))}
                </colgroup>
                <thead>
                    <tr className="bg-[#f0f0f0]">
                        {columns.map((c) => (
                            <th key={c.name} className="h-[19px] p-0 pl-[6px] leading-[18px] text-left font-normal whitespace-nowrap overflow-hidden border-r border-b border-[#bebebe]">
                                {c.name}
                            </th>
                        ))}
                    </tr>
                </thead>
                <tbody>
                    <tr className="bg-[#fafafa] text-[#0000f0]">
                        <td className={cell}>
                            <div className="flex items-center gap-1 pl-px"><PartGlyph />Plaque_fem1_i.prt</div>
                        </td>
                        <td className={cell} />
                        <td className={cell} />
                        <td className={cell}><div className="pl-1">Affichée et De t...</div></td>
                        <td className={cell} /><td className={cell} /><td className={cell} /><td className={cell} />
                    </tr>
                    <tr className="bg-[#f4f4f4]">
                        <td className={cell}>
                            <div className="flex items-center gap-1 pl-[9px]">
                                <span className="w-2 border-t border-dotted border-[#888]" />
                                <PartGlyph hole />Plaque.prt
                            </div>
                        </td>
                        {columns.slice(1).map((c) => <td key={c.name} className={cell} />)}
                    </tr>
                    {Array.from({ length: 60 }).map((_, i) => (
                        <tr key={i} className={i % 2 === 0 ? "bg-[#fafafa]" : "bg-[#f4f4f4]"}>
                            {columns.map((c) => <td key={c.name} className={cell} />)}
                        </tr>
                    ))}
                </tbody>
            </table>
        </div>
    );
}

function Navigator() {
    return (
        <aside className="w-[543px] shrink-0 bg-[#f0f0f0] border-r-2 border-[#b4b4b4] pl-2 pr-[9px] flex flex-col">
            <div className="h-[26px] flex items-center gap-[2px] text-[11px] text-black">
                <Svg size={16}><NavTree kind="mesh" /></Svg>
                <span>Navigateur de Simulation - Mode standard</span>
                <button aria-label="Agrandir" className="ml-auto w-[13px] h-[11px] border border-t-2 border-black" />
            </div>
            <div className="grow flex flex-col border border-[#bebebe]">
                <NavigatorTable />
                <div className="h-[17px] shrink-0 pl-[17px] pt-2">
                    <div className="w-[196px] h-[2px] bg-[#858585]" />
                </div>
            </div>
            <div className="h-[7px] mt-[2px] shrink-0 bg-[#bdbdbd] border border-[#a8a8a8]" />
            <div className="h-[76px] shrink-0">
                {["Rechercher", "Vue de fichier Simulation", "Aperçu"].map((name) => (
                    <button key={name} className="flex items-center gap-2 w-full h-[23px] pl-[9px] pt-1 text-[13px] leading-5 text-[#00648c] border-b-2 border-[#d0d0d0]">
                        <svg width="6" height="10" viewBox="0 0 6 10" aria-hidden="true"><path d="M0 0l6 5-6 5z" fill="#00648c" /></svg>
                        {name}
                    </button>
                ))}
            </div>
        </aside>
    );
}

/* ---------- graphics window ---------- */

const files = ["(MEF) Plaque_fem1.fem", "Plaque_2.prt", "(Simulation) Plaque_2_sim1.sim", "(Simulation) Vissage_sim1.sim", "(Simulation) Tuyau T_sim1.sim"];

function FileTabs() {
    return (
        <div className="h-[26px] shrink-0 flex items-stretch bg-[#f0f0f0] border-b-2 border-[#005f87] text-xs whitespace-nowrap">
            {files.map((name) => (
                <button key={name} className="flex items-center gap-1 pl-[5px] pr-4"><FileGlyph />{name}</button>
            ))}
            <div className="flex items-center bg-[#005f87] text-white">
                <button className="flex items-center gap-1 px-[5px]"><FileGlyph />(Idéalisée) Plaque_fem1_i.prt</button>
                <button aria-label="Fermer l'onglet" className="pr-[7px]">
                    <svg width="9" height="9" viewBox="0 0 9 9" stroke="#fff" strokeWidth="2" aria-hidden="true"><path d="M1 1l7 7M8 1L1 8" /></svg>
                </button>
            </div>
            <button className="ml-auto pr-1 flex items-center gap-[2px]">
                <svg width="9" height="7" viewBox="0 0 9 7" fill="none" stroke="#1e1e1e" strokeWidth="1.500" aria-hidden="true"><path d="M1 .5l3 3-3 3M5 .5l3 3-3 3" /></svg>
                2
            </button>
        </div>
    );
}

function Scene() {
    return (
        <svg viewBox="580 203 1339 853" className="absolute inset-0 w-full h-full" aria-label="Plaque percée">
            <path
                d="M912.500 302L1653 738.500 1478.500 847.500 738.500 410.500z"
                fill="#90a6b5"
                stroke="#2d2d2d"
                strokeWidth="1"
            />
            <ellipse cx="1195.700" cy="574.500" rx="63.500" ry="38.800" transform="rotate(2.200 1195.700 574.500)" fill="#fff" stroke="#2d2d2d" />
            <g fill="none" stroke="#a8a8a8" strokeWidth="1.200">
                <path d="M687 910.500L716.500 928 687.300 946 656.500 928zM656.500 928L656 962 686.500 979.500 715.500 962 716.500 928M687.300 946L686.500 979.500" />
            </g>
            <path d="M687 929V902" stroke="#236b23" strokeWidth="5" />
            <path d="M687.500 887L692.500 902Q687 906 682 902z" fill="#1d5f1d" />
            <path d="M701.500 953L724 966.500" stroke="#d93232" strokeWidth="5" strokeLinecap="round" />
            <path d="M739.500 976L720.500 971.500 725.500 963z" fill="#d93232" />
            <path d="M672 953.500L650 967" stroke="#0f50f0" strokeWidth="5" strokeLinecap="round" />
            <path d="M636 976L649 963 653.500 971z" fill="#0f50f0" />
            <g fontSize="12" textAnchor="middle">
                <text x="688" y="883" fill="#2f8f3a">Y</text>
                <text x="746" y="984" fill="#d93232">X</text>
                <text x="629" y="984" fill="#0f50f0">Z</text>
            </g>
        </svg>
    );
}

function GraphicsWindow() {
    return (
        <main className="grow flex flex-col min-w-0">
            <FileTabs />
            <div className="grow relative bg-white border-r border-[#bebebe] overflow-hidden">
                <Scene />
                <div className="absolute left-[374px] top-[368px] h-5 flex items-center gap-2 pl-1 pr-[2px] text-[11px] text-[#5a5a5a] bg-white/65 border border-[#bebebe] shadow-[3px_3px_2px_rgba(0,0,0,0.3)]">
                    <Svg size={16} box={32}><MidSurface /></Svg>
                    Surface moyenne de paire de faces(1)
                </div>
            </div>
        </main>
    );
}

export default function App() {
    return (
        <div className="h-screen flex flex-col overflow-hidden bg-[#f0f0f0] text-[#1e1e1e] font-['Open_Sans','Noto_Sans',sans-serif]">
            <TitleBar />
            <Ribbon />
            <Toolbar />
            <div className="grow flex min-h-0">
                <ResourceBar />
                <Navigator />
                <GraphicsWindow />
            </div>
            <footer className="h-6 shrink-0 flex items-center justify-center pl-[142px] bg-[#f0f0f0] border-t border-[#a0a0a0] border-b-2 border-b-[#00648c] text-[11px] font-semibold text-black">
                Surface moyenne de paire de faces(1)
            </footer>
        </div>
    );
}
